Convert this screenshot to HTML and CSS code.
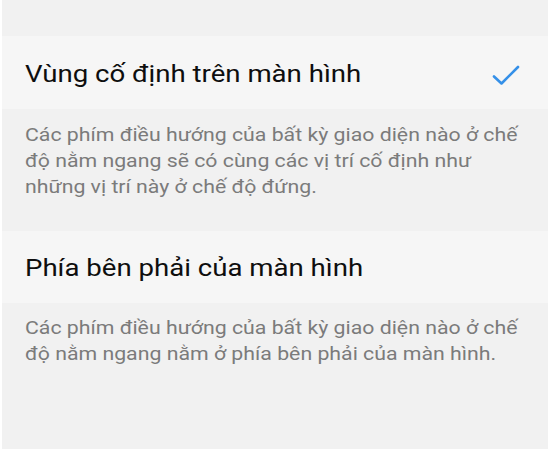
FILE: index.html
```html
<!DOCTYPE html>
<html lang="vi">
<head>
<meta charset="utf-8">
<link rel="stylesheet" href="styles.css">
</head>
<body>
<div class="screen">
  <div class="spacer"></div>
  <div class="row row1">
    <span class="title">Vùng cố định trên màn hình</span>
    <svg class="check" width="28" height="22" viewBox="0 0 28 22"><path d="M2 12.5 L9.5 19.5 L26 3" fill="none" stroke="#3590e8" stroke-width="2.6" stroke-linecap="round" stroke-linejoin="round"/></svg>
  </div>
  <div class="desc desc1"><span class="desc-text">Các phím điều hướng của bất kỳ giao diện nào ở chế<br>độ nằm ngang sẽ có cùng các vị trí cố định như<br>những vị trí này ở chế độ đứng.</span></div>
  <div class="row row2">
    <span class="title">Phía bên phải của màn hình</span>
  </div>
  <div class="desc desc2"><span class="desc-text">Các phím điều hướng của bất kỳ giao diện nào ở chế<br>độ nằm ngang nằm ở phía bên phải của màn hình.</span></div>
</div>
</body>
</html>
```
FILE: styles.css
```css
html, body {
  margin: 0;
  padding: 0;
  background: #ffffff;
}
body {
  padding: 0 2px 1px 2px;
  width: 550px;
  height: 450px;
  box-sizing: border-box;
  overflow: hidden;
}
.screen {
  height: 449px;
  background: #f1f1f1;
  font-family: Roboto, "Noto Sans", sans-serif;
  display: flex;
  flex-direction: column;
}
.spacer {
  height: 36px;
}
.row {
  background: #f6f6f6;
  display: flex;
  align-items: center;
  justify-content: space-between;
  padding: 0 28px 0 23px;
}
.row1 {
  height: 73px;
}
.row2 {
  height: 72px;
}
.title {
  display: inline-block;
  font-size: 24px;
  color: #0e0e0e;
  margin-top: 2px;
  transform: scaleX(1.15);
  transform-origin: 0 50%;
  white-space: nowrap;
}
.check {
  display: block;
  margin-top: 4px;
}
.desc {
  font-size: 19px;
  line-height: 26px;
  color: #7b7b7b;
  padding: 13px 20px 0 23px;
  white-space: nowrap;
}
.desc-text {
  display: inline-block;
  transform: scaleX(1.12);
  transform-origin: 0 0;
}
.desc1 {
  height: 122px;
  box-sizing: border-box;
}
.desc2 {
  padding-top: 12px;
}
```
